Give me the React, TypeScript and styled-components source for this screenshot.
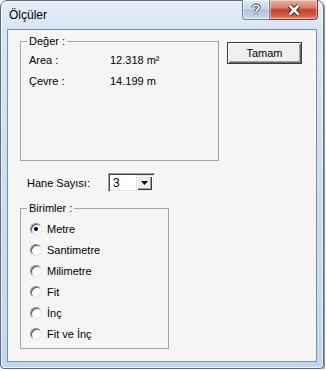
import { createGlobalStyle, styled } from 'styled-components';

const Global = createGlobalStyle`
  body {
    margin: 0;
    background: #ffffff;
    font-family: "Liberation Sans", Arial, sans-serif;
  }
`;

const Window = styled.div`
  box-sizing: border-box;
  width: 324px;
  height: 369px;
  display: flex;
  flex-direction: column;
  padding: 0 6px 6px 6px;
  border: 1px solid #5a6b7e;
  border-radius: 7px 7px 4px 4px;
  background: linear-gradient(180deg, #e6eff9 0px, #d6e5f5 28px, #c9dcf1 60%, #c2d7ef 100%);
  box-shadow: inset 0 0 0 1px rgba(255, 255, 255, 0.75), 1px 1px 1px rgba(0, 0, 0, 0.45);
`;

const TitleBar = styled.div`
  height: 28px;
  display: flex;
  align-items: flex-start;
`;

const Title = styled.span`
  margin: 7px 0 0 2px;
  font-size: 12px;
  line-height: 15px;
  color: #000;
`;

const Caption = styled.div`
  margin: -1px -1px 0 auto;
  display: flex;
  height: 20px;
`;

const CaptionButton = styled.div<{ $close?: boolean }>`
  box-sizing: border-box;
  width: ${(p) => (p.$close ? '48px' : '28px')};
  height: 20px;
  display: flex;
  align-items: center;
  justify-content: center;
  border: 1px solid ${(p) => (p.$close ? '#7a3a30' : '#6f8198')};
  border-top: none;
  border-left: ${(p) => (p.$close ? 'none' : undefined)};
  border-radius: ${(p) => (p.$close ? '0 0 4px 0' : '0 0 0 4px')};
  background: ${(p) =>
    p.$close
      ? 'linear-gradient(180deg, #eab2a3 0%, #d9806b 40%, #c4452c 52%, #cf5a40 80%, #e28a6e 100%)'
      : 'linear-gradient(180deg, #e4ebf4 0%, #c9d5e4 45%, #b3c3d8 52%, #c0cee0 80%, #d6e0ec 100%)'};
  box-shadow: inset 0 0 0 1px rgba(255, 255, 255, 0.45);
`;

const Client = styled.div`
  flex: 1;
  box-sizing: border-box;
  border: 1px solid #7f8fa2;
  background: #f5f5f5;
  padding: 11px 0 0 12px;
  display: flex;
  flex-direction: column;
  font-size: 11px;
  color: #000;
`;

const TopRow = styled.div`
  display: flex;
  align-items: flex-start;
  gap: 8px;
`;

const GroupBox = styled.div<{ $w: number; $h: number; $gap?: number }>`
  position: relative;
  box-sizing: border-box;
  width: ${(p) => p.$w}px;
  height: ${(p) => p.$h}px;
  margin-top: ${(p) => p.$gap ?? 0}px;
  border: 1px solid #a5a5a5;
`;

const Legend = styled.span`
  position: absolute;
  top: -7px;
  left: 6px;
  padding: 0 2px 0 2px;
  line-height: 13px;
  background: #f5f5f5;
`;

const ValueList = styled.div`
  padding: 7px 0 0 8px;
`;

const ValueRow = styled.div`
  display: grid;
  grid-template-columns: 81px auto;
  height: 21px;
  align-items: center;
`;

const Button = styled.div`
  box-sizing: border-box;
  margin-top: 1px;
  width: 75px;
  height: 22px;
  display: flex;
  align-items: center;
  justify-content: center;
  border: 1px solid #3c3c3c;
  background: #f0f0f0;
  box-shadow: inset 1px 1px 0 #ffffff, inset -1px -1px 0 #6a6a6a, inset -2px -2px 0 #a0a0a0;
`;

const HaneRow = styled.div`
  margin: 12px 0 0 7px;
  display: flex;
  align-items: center;
  height: 19px;
`;

const HaneLabel = styled.span`
  width: 81px;
`;

const Combo = styled.div`
  box-sizing: border-box;
  width: 47px;
  height: 19px;
  display: flex;
  align-items: center;
  border-style: solid;
  border-width: 1px;
  border-color: #a0a0a0 #ffffff #ffffff #a0a0a0;
  box-shadow: inset 1px 1px 0 #404040, inset -1px -1px 0 #e3e3e3;
  background: #fff;
  padding: 2px;
`;

const ComboText = styled.span`
  flex: 1;
  padding-left: 2px;
  font-size: 12px;
`;

const ComboArrow = styled.div`
  box-sizing: border-box;
  width: 16px;
  height: 15px;
  display: flex;
  align-items: center;
  justify-content: center;
  background: #ececec;
  box-shadow: inset 1px 1px 0 #e3e3e3, inset 2px 2px 0 #ffffff, inset -1px -1px 0 #404040, inset -2px -2px 0 #a0a0a0;
`;

const RadioList = styled.div`
  padding: 9px 0 0 9px;
`;

const RadioRow = styled.div`
  display: flex;
  align-items: center;
  gap: 5px;
  height: 21px;
`;

const RadioCircle = styled.span<{ $checked?: boolean }>`
  box-sizing: border-box;
  width: 12px;
  height: 12px;
  border-radius: 50%;
  display: flex;
  align-items: center;
  justify-content: center;
  background: #fff;
  border: 1px solid;
  border-color: #8a8a8a #e6e6e6 #e6e6e6 #8a8a8a;
  box-shadow: inset 1px 1px 0 #5a5a5a;
  &::after {
    content: '';
    width: 4px;
    height: 4px;
    border-radius: 50%;
    background: ${(p) => (p.$checked ? '#000' : 'transparent')};
  }
`;

const units = ['Metre', 'Santimetre', 'Milimetre', 'Fit', 'İnç', 'Fit ve İnç'];

function App() {
  return (
    <>
      <Global />
      <Window>
        <TitleBar>
          <Title>Ölçüler</Title>
          <Caption>
            <CaptionButton>
              <svg width="12" height="13" viewBox="0 0 12 13">
                <path
                  d="M3 4.5 C3 1.5 9 1.5 9 4.5 C9 6.5 6 6.5 6 8.5 M6 10.5 L6 12"
                  fill="none"
                  stroke="#3c4a5c"
                  strokeWidth="3.4"
                />
                <path
                  d="M3 4.5 C3 1.5 9 1.5 9 4.5 C9 6.5 6 6.5 6 8.5 M6 10.5 L6 12"
                  fill="none"
                  stroke="#ffffff"
                  strokeWidth="1.6"
                />
              </svg>
            </CaptionButton>
            <CaptionButton $close>
              <svg width="14" height="12" viewBox="0 0 14 12">
                <path d="M2.5 1.5 L11.5 10.5 M11.5 1.5 L2.5 10.5" stroke="#5a1d14" strokeWidth="4.6" />
                <path d="M2.5 1.5 L11.5 10.5 M11.5 1.5 L2.5 10.5" stroke="#ffffff" strokeWidth="2.6" />
              </svg>
            </CaptionButton>
          </Caption>
        </TitleBar>
        <Client>
          <TopRow>
            <GroupBox $w={199} $h={120}>
              <Legend>Değer :</Legend>
              <ValueList>
                <ValueRow>
                  <span>Area :</span>
                  <span>12.318 m²</span>
                </ValueRow>
                <ValueRow>
                  <span>Çevre :</span>
                  <span>14.199 m</span>
                </ValueRow>
              </ValueList>
            </GroupBox>
            <Button>Tamam</Button>
          </TopRow>
          <HaneRow>
            <HaneLabel>Hane Sayısı:</HaneLabel>
            <Combo>
              <ComboText>3</ComboText>
              <ComboArrow>
                <svg width="7" height="4" viewBox="0 0 7 4">
                  <path d="M0 0 H7 L3.5 4 Z" fill="#000" />
                </svg>
              </ComboArrow>
            </Combo>
          </HaneRow>
          <GroupBox $w={149} $h={141} $gap={16}>
            <Legend>Birimler :</Legend>
            <RadioList>
              {units.map((u, i) => (
                <RadioRow key={u}>
                  <RadioCircle $checked={i === 0} />
                  <span>{u}</span>
                </RadioRow>
              ))}
            </RadioList>
          </GroupBox>
        </Client>
      </Window>
    </>
  );
}

export default App;
